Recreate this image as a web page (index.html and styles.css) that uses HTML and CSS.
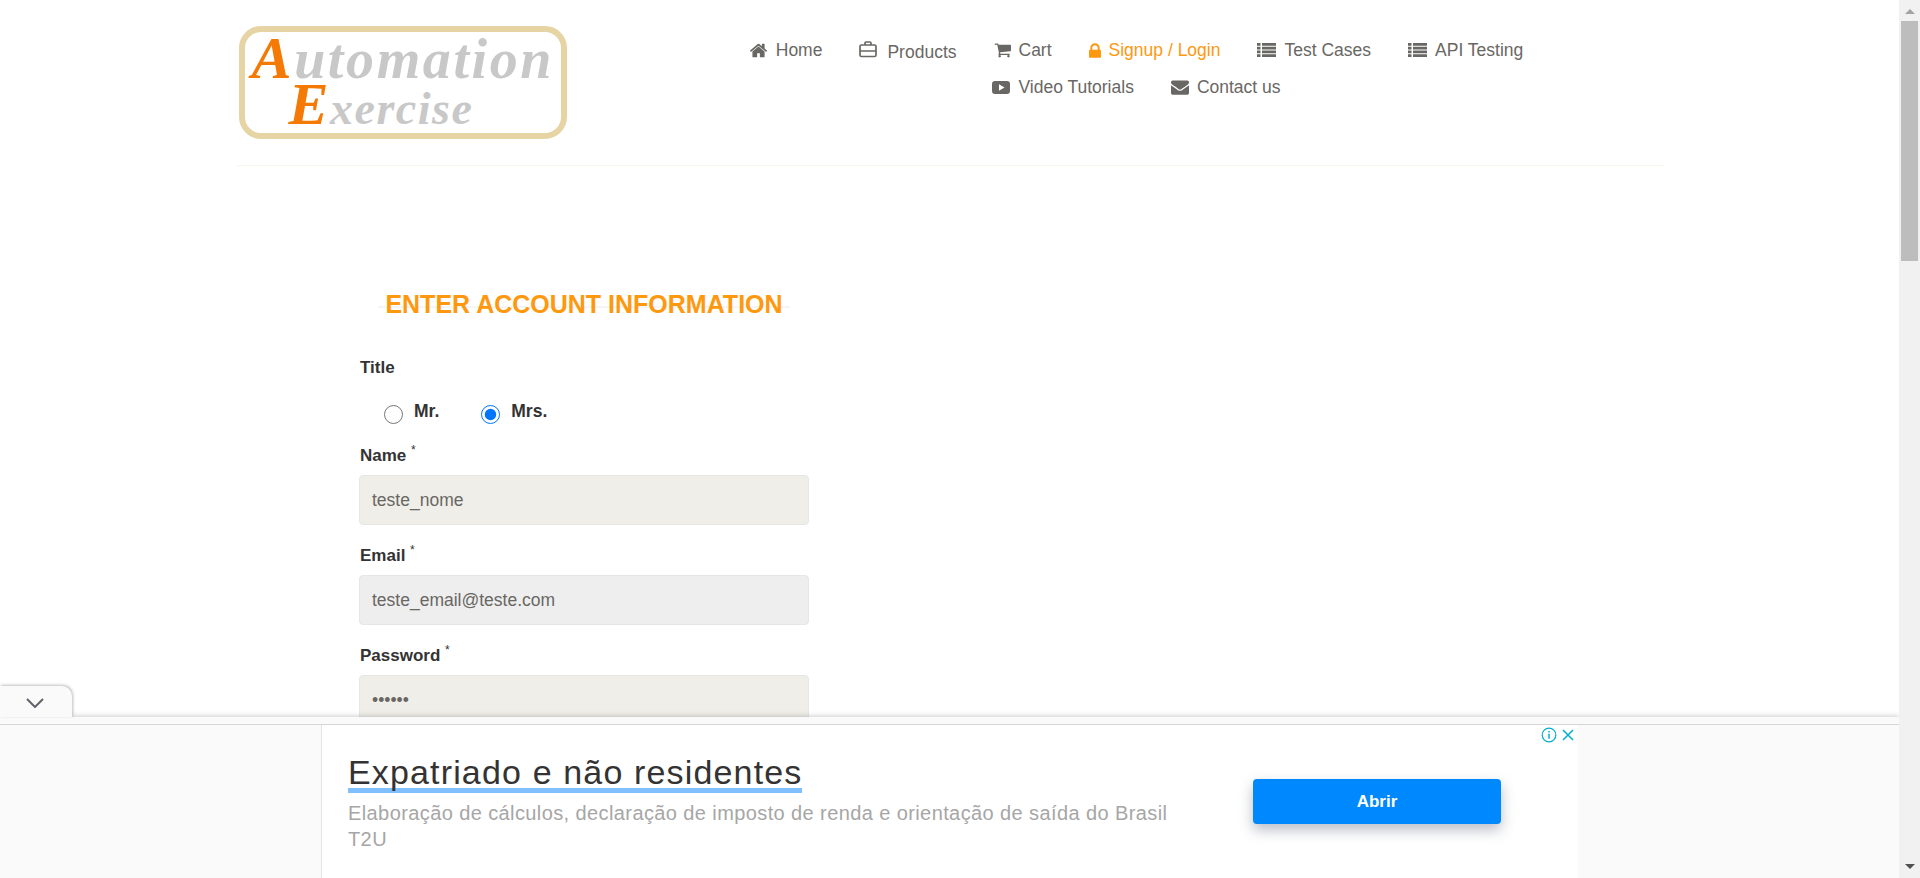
FILE: index.html
```html
<!DOCTYPE html>
<html lang="en">
<head>
  <meta charset="UTF-8">
  <meta name="viewport" content="width=device-width, initial-scale=1.0">
  <title>Automation Exercise - Signup</title>
  <link rel="stylesheet" href="styles.css">
</head>
<body>
  <div class="page">
    <div class="content">
      <header class="site-header">
        <a class="logo" href="#">
          <span class="logo-line"><b>A</b>utomation</span>
          <span class="logo-line logo-line-second"><b>E</b>xercise</span>
        </a>
        <nav class="main-nav">
          <a href="#" class="nav-home">
            <svg class="icon" viewBox="90 230 1610 1310"><path d="M1472 992v480q0 26-19 45t-45 19h-384v-384h-256v384h-384q-26 0-45-19t-19-45v-480q0-1 .5-3t.5-3l575-474 575 474q1 2 1 6zm223-69l-62 74q-8 9-21 11h-3q-13 0-21-7l-692-577-692 577q-12 8-24 7-13-2-21-11l-62-74q-8-10-7-23.500t11-21.500l719-599q32-26 76-26t76 26l244 204v-195q0-14 9-23t23-9h192q14 0 23 9t9 23v408l219 182q10 8 11 21.500t-7 23.500z"/></svg>
            Home
          </a>
          <a href="#" class="nav-products">
            <svg class="icon icon-case" viewBox="0 0 18 17"><path d="M6 4V2.200Q6 1 7.200 1h3.600Q12 1 12 2.200V4M2.500 4h13Q17 4 17 5.500v8.500q0 1.500-1.500 1.500h-13Q1 15.500 1 14V5.500Q1 4 2.500 4zM1 10h16" fill="none" stroke="currentColor" stroke-width="1.700"/></svg>
            Products
          </a>
          <a href="#">
            <svg class="icon" viewBox="0 250 1730 1414"><path d="M704 1536q0 52-38 90t-90 38-90-38-38-90 38-90 90-38 90 38 38 90zm896 0q0 52-38 90t-90 38-90-38-38-90 38-90 90-38 90 38 38 90zm128-1088v512q0 24-16.500 42.500t-40.500 21.500l-1044 122q13 60 13 70 0 16-24 64h920q26 0 45 19t19 45-19 45-45 19h-1024q-26 0-45-19t-19-45q0-11 8-31.500t16-36 21.500-40 15.500-29.500l-177-823h-204q-26 0-45-19t-19-45 19-45 45-19h256q16 0 28.500 6.500t19.500 15.500 13 24.500 8 26 5.500 29.500 4.500 26h1201q26 0 45 19t19 45z"/></svg>
            Cart
          </a>
          <a href="#" class="nav-active">
            <svg class="icon icon-lock" viewBox="320 128 1152 1408"><path d="M640 768h512v-192q0-106-75-181t-181-75-181 75-75 181v192zm832 96v576q0 40-28 68t-68 28h-960q-40 0-68-28t-28-68v-576q0-40 28-68t68-28h32v-192q0-184 132-316t316-132 316 132 132 316v192h32q40 0 68 28t28 68z"/></svg>
            Signup / Login
          </a>
          <a href="#">
            <svg class="icon icon-list" viewBox="0 0 19 14"><path d="M0 0h3.500v2.800H0zM5 0h14v2.800H5zM0 3.700h3.500v2.800H0zM5 3.700h14v2.800H5zM0 7.500h3.500v2.800H0zM5 7.500h14v2.800H5zM0 11.200h3.500V14H0zM5 11.200h14V14H5z"/></svg>
            Test Cases
          </a>
          <a href="#">
            <svg class="icon icon-list" viewBox="0 0 19 14"><path d="M0 0h3.500v2.800H0zM5 0h14v2.800H5zM0 3.700h3.500v2.800H0zM5 3.700h14v2.800H5zM0 7.500h3.500v2.800H0zM5 7.500h14v2.800H5zM0 11.200h3.500V14H0zM5 11.200h14V14H5z"/></svg>
            API Testing
          </a>
          <a href="#">
            <svg class="icon icon-video" viewBox="0 0 18 13"><path fill-rule="evenodd" d="M3 0h12q3 0 3 3v7q0 3-3 3H3q-3 0-3-3V3q0-3 3-3zM7 3.200v6.600l5.500-3.300z"/></svg>
            Video Tutorials
          </a>
          <a href="#">
            <svg class="icon icon-mail" viewBox="0 128 1792 1536"><path d="M1792 710v794q0 66-47 113t-113 47h-1472q-66 0-113-47t-47-113v-794q44 49 101 87 362 246 497 345 57 42 92.500 65.500t94.500 48 110 24.500h2q51 0 110-24.500t94.500-48 92.500-65.500q170-123 498-345 57-39 100-87zm0-294q0 79-49 151t-122 123q-376 261-468 325-10 7-42.500 30.500t-54 38-52 32.500-57.500 27-50 9h-2q-23 0-50-9t-57.500-27-52-32.500-54-38-42.500-30.500q-91-64-262-182.500t-205-142.500q-62-42-117-115.500t-55-136.500q0-78 41.500-130t118.500-52h1472q65 0 112.500 47t47.500 113z"/></svg>
            Contact us
          </a>
        </nav>
      </header>

      <main class="signup">
        <h2 class="signup-title">ENTER ACCOUNT INFORMATION</h2>
        <form>
          <label class="field-label title-label">Title</label>
          <div class="radio-row">
            <label class="radio-option"><input type="radio" name="title"><span>Mr.</span></label>
            <label class="radio-option"><input type="radio" name="title" checked><span>Mrs.</span></label>
          </div>
          <label class="field-label" for="name">Name <sup>*</sup></label>
          <input class="text-field" type="text" id="name" value="teste_nome">
          <label class="field-label" for="email">Email <sup>*</sup></label>
          <input class="text-field text-field-disabled" type="text" id="email" value="teste_email@teste.com">
          <label class="field-label" for="password">Password <sup>*</sup></label>
          <input class="text-field" type="password" id="password" value="teste1">
        </form>
      </main>

      <div class="ad-bar">
        <button class="ad-toggle" type="button">
          <svg viewBox="0 0 18 10" width="18" height="10"><path d="M1 1l8 8 8-8" fill="none" stroke="#5f6368" stroke-width="2"/></svg>
        </button>
        <div class="ad-strip"></div>
        <div class="ad-panel">
          <div class="ad-text">
            <div class="ad-heading">Expatriado e não residentes</div>
            <p class="ad-body">Elaboração de cálculos, declaração de imposto de renda e orientação de saída do Brasil<br>T2U</p>
          </div>
          <a class="ad-button" href="#">Abrir</a>
          <div class="ad-controls">
            <svg viewBox="0 0 16 16" width="16" height="16"><circle cx="8" cy="8" r="6.800" fill="none" stroke="#00aecd" stroke-width="1.200"/><path d="M8 6.800v5M8 4v1.500" fill="none" stroke="#00aecd" stroke-width="1.500"/></svg>
            <svg viewBox="0 0 12 12" width="12" height="12"><path d="M1 1l10 10M11 1L1 11" fill="none" stroke="#00aecd" stroke-width="1.500"/></svg>
          </div>
        </div>
      </div>
    </div>

    <div class="scrollbar">
      <span class="scroll-arrow scroll-arrow-up"></span>
      <span class="scroll-thumb"></span>
      <span class="scroll-arrow scroll-arrow-down"></span>
    </div>
  </div>
</body>
</html>
```

FILE: styles.css
```css
* {
  box-sizing: border-box;
}

html, body {
  height: 100%;
  margin: 0;
  overflow: hidden;
}

body {
  font-family: "Liberation Sans", Arial, sans-serif;
  color: #696763;
  background-color: #ffffff;
}

a {
  color: inherit;
  text-decoration: none;
}

.page {
  display: flex;
  height: 878px;
}

.content {
  position: relative;
  flex: 1;
  overflow: hidden;
}

/* header */
.site-header {
  display: flex;
  width: 1428px;
  height: 166px;
  margin: 0 auto;
  border-bottom: 1px solid #f7f7f0;
}

.logo {
  flex: none;
  display: flex;
  flex-direction: column;
  width: 328px;
  height: 113px;
  margin: 26px 0 0 3px;
  padding: 4px 0 0 7px;
  border: 6px solid #e6d4a5;
  border-radius: 22px;
  font-family: "Liberation Serif", serif;
  font-style: italic;
  font-weight: bold;
  color: #c8c8c8;
}

.logo-line {
  font-size: 56px;
  line-height: 46px;
  letter-spacing: 2.600px;
  white-space: nowrap;
}

.logo-line b {
  color: #f57a05;
  font-size: 60px;
  line-height: 40px;
}

.logo-line-second {
  margin: 2px 0 0 37px;
  font-size: 46px;
  letter-spacing: 1.500px;
}

.main-nav {
  display: flex;
  flex-wrap: wrap;
  justify-content: center;
  align-content: flex-start;
  gap: 17px 37px;
  width: 850px;
  margin-left: 145px;
  padding-top: 40px;
  font-size: 17.500px;
  line-height: 20px;
}

.main-nav a {
  display: flex;
  align-items: center;
  gap: 8px;
  height: 20px;
}

.main-nav .nav-home {
  gap: 9px;
}

.main-nav .nav-products {
  gap: 10px;
  padding-top: 3px;
}

.nav-products .icon-case {
  margin-top: -5px;
}

.main-nav .nav-active {
  color: #fe980f;
}

.icon {
  flex: none;
  width: 17px;
  height: 15px;
  fill: currentColor;
}

.icon-case {
  width: 18px;
  height: 17px;
}

.icon-lock {
  width: 12px;
  height: 15px;
}

.icon-list {
  width: 19px;
  height: 14px;
}

.icon-video {
  width: 18px;
  height: 13px;
}

.icon-mail {
  width: 18px;
  height: 16px;
}

/* signup form */
.signup {
  width: 450px;
  margin-left: 359px;
}

.signup-title {
  margin: 122px 0 0 19px;
  width: 412px;
  color: #fe980f;
  font-size: 25px;
  line-height: 32px;
  text-align: center;
  background: linear-gradient(#f5f5f5, #f5f5f5) center 18px / 100% 2px no-repeat;
}

.signup form {
  display: flex;
  flex-direction: column;
}

.field-label {
  display: block;
  margin: 0 0 9px 1px;
  font-size: 17px;
  line-height: 20px;
  font-weight: bold;
  color: #333333;
}

.field-label sup {
  font-size: 12px;
  font-weight: normal;
  line-height: 0;
}

.title-label {
  margin-top: 38px;
}

.radio-row {
  display: flex;
  gap: 42px;
  margin: 17px 0 22px 25px;
}

.radio-option {
  display: flex;
  gap: 11px;
  font-size: 17.500px;
  line-height: 20px;
  font-weight: bold;
  color: #333333;
}

.radio-option input {
  width: 19px;
  height: 19px;
  margin: 1px 0 0;
}

.radio-option span {
  margin-top: -3px;
}

.text-field {
  display: block;
  width: 100%;
  height: 50px;
  margin-bottom: 21px;
  padding: 0 12px;
  border: 1px solid #e8e8e2;
  border-radius: 4px;
  background-color: #efeee8;
  color: #696763;
  font-family: inherit;
  font-size: 17.500px;
}

.text-field-disabled {
  background-color: #eeeeee;
  border-color: #e6e6e6;
}

/* ad banner at the bottom */
.ad-bar {
  position: absolute;
  left: 0;
  right: 0;
  bottom: 0;
  height: 161px;
  background-color: #fafafa;
  box-shadow: 0 -1px 5px rgba(0, 0, 0, 0.2);
}

.ad-strip {
  height: 8px;
  border-bottom: 1px solid #d6d6d6;
}

.ad-toggle {
  position: absolute;
  left: 0;
  top: -31px;
  width: 72px;
  height: 31px;
  padding: 4px 2px 0 0;
  border: none;
  border-top-right-radius: 10px;
  background-color: #fafafa;
  box-shadow: 1px -1px 3px rgba(0, 0, 0, 0.25);
}

.ad-panel {
  position: relative;
  display: flex;
  justify-content: space-between;
  width: 1257px;
  height: 153px;
  margin-left: 321px;
  padding: 29px 77px 0 26px;
  border-left: 1px solid #e4e4e4;
  background-color: #ffffff;
}

.ad-heading {
  display: inline-block;
  padding-bottom: 3px;
  color: #333333;
  font-size: 34px;
  line-height: 36px;
  letter-spacing: 1.150px;
  background: linear-gradient(#80c0ff, #80c0ff) left 34px / 100% 5px no-repeat;
}

.ad-body {
  margin: 7px 0 0;
  color: #a6a6a6;
  font-size: 20px;
  line-height: 26px;
  letter-spacing: 0.400px;
}

.ad-button {
  flex: none;
  width: 248px;
  height: 45px;
  margin-top: 25px;
  border-radius: 4px;
  background-color: #0088ff;
  color: #ffffff;
  font-size: 17px;
  font-weight: bold;
  line-height: 45px;
  text-align: center;
  box-shadow: 0 6px 14px rgba(60, 70, 100, 0.35);
}

.ad-controls {
  position: absolute;
  top: 2px;
  right: 4px;
  display: flex;
  align-items: center;
  gap: 5px;
}

/* browser scrollbar */
.scrollbar {
  position: relative;
  flex: none;
  width: 21px;
  background-color: #f1f1f1;
}

.scroll-thumb {
  position: absolute;
  left: 2px;
  top: 21px;
  width: 17px;
  height: 240px;
  background-color: #bdbdbd;
}

.scroll-arrow {
  position: absolute;
  left: 6px;
  width: 0;
  height: 0;
  border-left: 5px solid transparent;
  border-right: 5px solid transparent;
}

.scroll-arrow-up {
  top: 9px;
  border-bottom: 5px solid #a3a3a3;
}

.scroll-arrow-down {
  bottom: 9px;
  border-top: 5px solid #505050;
}
```
